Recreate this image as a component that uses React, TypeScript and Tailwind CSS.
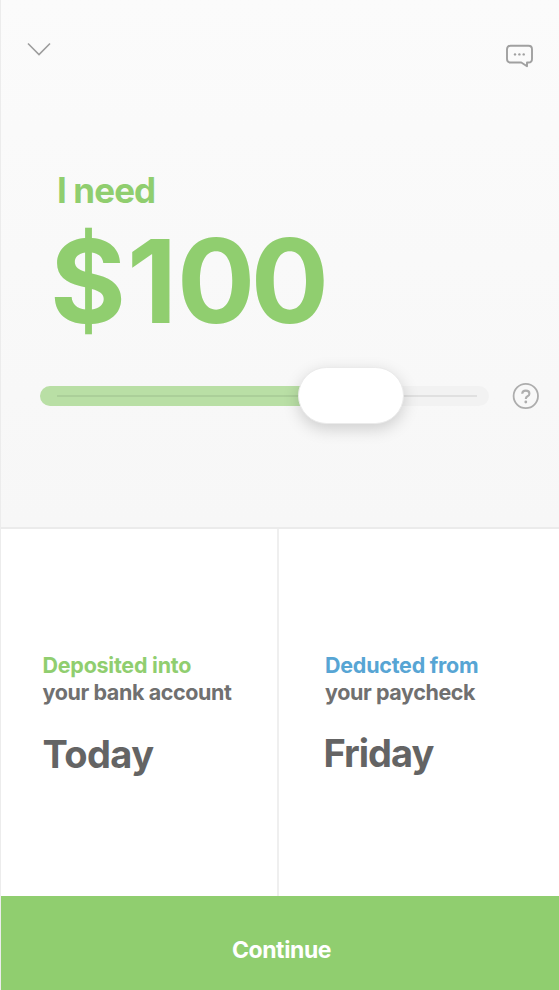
const TRACK_WIDTH = 449;
const THUMB_LEFT = 258;

const columns = [
  { title: "Deposited into", note: "your bank account", day: "Today", titleClass: "text-[#90ce6f] tracking-[-0.25px]", noteClass: "tracking-[-0.4px]", box: "w-[278px] border-r-2 border-[#efefef] pl-[41.5px]", dayClass: "mt-[26px] tracking-[-0.6px]" },
  { title: "Deducted from", note: "your paycheck", day: "Friday", titleClass: "text-[#57a5d4] tracking-[-0.25px]", noteClass: "tracking-[-0.4px]", box: "flex-1 pl-[46px]", dayClass: "mt-[25px] -ml-[1.5px] tracking-[-1px]" },
];

export default function App() {
  return (
    <div className="flex h-[990px] w-[559px] flex-col overflow-hidden border-l border-[#ececec] bg-white font-['Inter',sans-serif]">
      {/* Amount */}
      <section className="h-[529px] shrink-0 border-b-2 border-[#ebebeb] bg-linear-to-b from-[#fbfbfb] via-[#f9f9f9] to-[#f7f7f7]">
        <header className="flex h-[170px] justify-between pl-[26px] pr-[25px]">
          <button className="mt-[42px] h-4 w-6" aria-label="Close">
            <ChevronIcon />
          </button>
          <button className="mt-[43px] h-[26px] w-[29px]" aria-label="Chat">
            <ChatIcon />
          </button>
        </header>

        <h2 className="pl-[56px] text-[35px] font-bold leading-10 tracking-[-0.9px] text-[#90ce6f]">I need</h2>
        <div className="mt-[13px] pl-[49px] text-[116px] font-bold leading-[116px] text-[#90ce6f]">
          <span className="tracking-[1px]">$</span>
          <span>1</span>
          <span className="tracking-[-4.5px]">00</span>
        </div>

        {/* Slider */}
        <div className="mt-[27px] flex h-[60px] items-center pl-[39px]">
          <div className="relative h-[20px] rounded-full bg-[#f2f2f2]" style={{ width: TRACK_WIDTH }}>
            <div className="h-full rounded-l-full bg-[#b9dfa5]" style={{ width: THUMB_LEFT + 30 }} />
            <div className="absolute left-[17px] right-[12px] top-[9px] h-0.5 bg-black/7" />
            <div
              className="absolute -top-[19px] h-[57px] w-[106px] rounded-full border border-[#ebebeb] bg-white shadow-[0_5px_16px_rgba(0,0,0,0.17)]"
              style={{ left: THUMB_LEFT }}
            />
          </div>
          <button className="ml-[23px] h-7 w-7" aria-label="Help">
            <HelpIcon />
          </button>
        </div>
      </section>

      {/* Dates */}
      <section className="flex flex-1">
        {columns.map((c) => (
          <div key={c.title} className={`pt-[123px] text-[21.5px] font-bold leading-[27px] ${c.box}`}>
            <p className={c.titleClass}>{c.title}</p>
            <p className={`text-[#707070] ${c.noteClass}`}>{c.note}</p>
            <p className={`text-[38px] leading-[44px] text-[#646464] ${c.dayClass}`}>{c.day}</p>
          </div>
        ))}
      </section>

      <button className="h-[94px] shrink-0 bg-[#90ce6f] pt-[14px] pl-[3px] text-[23px] font-bold tracking-[-0.4px] text-white">
        Continue
      </button>
    </div>
  );
}

function ChevronIcon() {
  return (
    <svg viewBox="0 0 24 16" fill="none" stroke="#9d9d9d" strokeWidth="1.6">
      <path d="M1 1.5 12 12.5 23 1.5" />
    </svg>
  );
}

function ChatIcon() {
  return (
    <svg viewBox="0 0 29 26" fill="none" stroke="#a0a0a0" strokeWidth="1.9" strokeLinejoin="round">
      <path d="M5.5 2.7H23.5Q27 2.7 27 6.2V16Q27 19.5 23.5 19.5H22V23.2L16.3 19.5H5.5Q2 19.5 2 16V6.2Q2 2.7 5.5 2.7Z" />
      <g fill="#a0a0a0" stroke="none">
        <circle cx="10" cy="11.4" r="1.2" />
        <circle cx="14.4" cy="11.4" r="1.2" />
        <circle cx="18.7" cy="11.4" r="1.2" />
      </g>
    </svg>
  );
}

function HelpIcon() {
  return (
    <svg viewBox="0 0 28 28" fill="none" stroke="#adadad" strokeWidth="1.8">
      <circle cx="13.8" cy="14" r="12.2" />
      <path d="M10.2 11.8Q10.4 8.6 13.8 8.6Q17.4 8.6 17.4 11.7Q17.4 13.3 15.5 14.3Q13.8 15.2 13.8 17" strokeWidth="2.1" />
      <circle cx="13.8" cy="20" r="1.4" fill="#adadad" stroke="none" />
    </svg>
  );
}
